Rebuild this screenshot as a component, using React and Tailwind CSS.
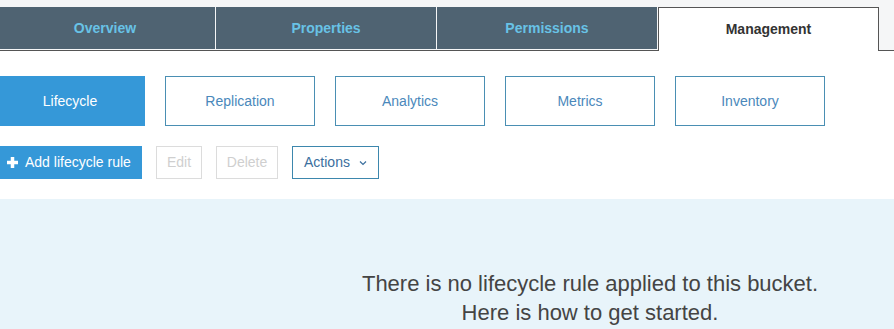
import React from 'react';

const topTabs = ['Overview', 'Properties', 'Permissions'];
const subTabs = ['Replication', 'Analytics', 'Metrics', 'Inventory'];

const App = () => {
  return (
    <div className="w-[894px] h-[329px] overflow-hidden bg-white" style={{ fontFamily: '"Liberation Sans", Arial, sans-serif' }}>
      {/* main tabs */}
      <div className="flex items-start pt-[7px] bg-[#f5f6f7] border-b border-[#555]">
        <div className="flex items-start -ml-[5px] gap-px">
          {topTabs.map((t) => (
            <div key={t} className="w-[220px] h-[42px] bg-[#4f6372] flex items-center justify-center text-[14px] font-bold text-[#68c2e6]">
              {t}
            </div>
          ))}
          <div className="w-[221px] h-[44px] -mb-px bg-white border border-b-0 border-[#555] flex items-center justify-center text-[14px] font-bold text-[#333]">
            Management
          </div>
        </div>
      </div>

      {/* sub tabs */}
      <div className="flex gap-5 mt-[25px] -ml-[5px]">
        <div className="w-[150px] h-[50px] bg-[#3598d8] flex items-center justify-center text-[14px] text-white">
          Lifecycle
        </div>
        {subTabs.map((t) => (
          <div key={t} className="w-[150px] h-[50px] border border-[#4a8fb3] flex items-center justify-center text-[14px] text-[#4a88bb]">
            {t}
          </div>
        ))}
      </div>

      {/* actions */}
      <div className="flex items-center mt-[20px] h-[33px]">
        <button className="w-[142px] h-[33px] bg-[#3598d8] text-white text-[14px] flex items-center pl-[7px]">
          <svg width="11" height="11" viewBox="0 0 11 11" className="mr-[7px]">
            <rect x="3.75" y="0" width="3.5" height="11" fill="white" />
            <rect x="0" y="3.75" width="11" height="3.5" fill="white" />
          </svg>
          Add lifecycle rule
        </button>
        <button className="ml-[14px] w-[46px] h-[33px] border border-[#dcdcdc] text-[14px] text-[#cfcfcf]">Edit</button>
        <button className="ml-[14px] w-[62px] h-[33px] border border-[#dcdcdc] text-[14px] text-[#cfcfcf]">Delete</button>
        <button className="ml-[14px] w-[87px] h-[33px] border border-[#3d87ad] text-[14px] text-[#3b6f9e] flex items-center justify-center gap-[9px]">
          Actions
          <svg width="8" height="6" viewBox="0 0 8 6">
            <path d="M1 1.5 L4 4.5 L7 1.5" stroke="#3b6f9e" strokeWidth="1.2" fill="none" />
          </svg>
        </button>
      </div>

      {/* empty state */}
      <div className="mt-[20px] h-[140px] bg-[#e8f4fa] pt-[70px] pl-[286px] text-center text-[22px] leading-[29px] text-[#444]">
        <p>There is no lifecycle rule applied to this bucket.</p>
        <p>Here is how to get started.</p>
      </div>
    </div>
  );
};

export default App;
